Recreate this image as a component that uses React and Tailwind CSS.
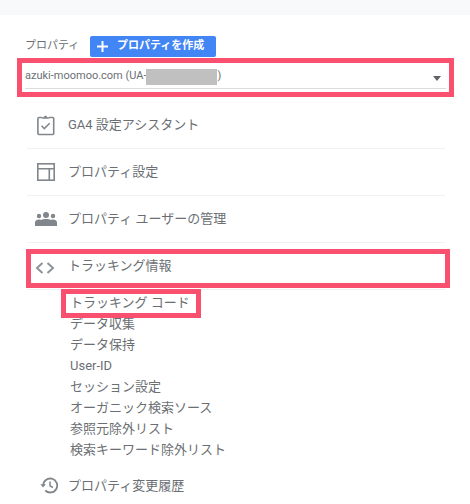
import React from 'react';

const FONT = "font-['Roboto','Noto_Sans_CJK_JP',sans-serif]";

const subItems = [
    'トラッキング コード',
    'データ収集',
    'データ保持',
    'User-ID',
    'セッション設定',
    'オーガニック検索ソース',
    '参照元除外リスト',
    '検索キーワード除外リスト',
];

// ── Icons ─────────────────────────────────────────────────
const ClipboardIcon = () => (
    <svg width="20" height="22" viewBox="0 0 20 22" fill="none" stroke="#80868b" strokeWidth="1.6">
        <path d="M6 3.5H2.800a.9.9 0 0 0-.9.9v15.200c0 .5.4.9.9.9h14c.5 0 .9-.4.9-.9V4.400a.9.9 0 0 0-.9-.9H13" />
        <path d="M6 4.800V3.300h1.700C7.900 1.200 11.100 1.200 11.300 3.300H13v1.500z" fill="#80868b" stroke="none" />
        <path d="M5.500 11.800l2.800 2.800 5.400-5.400" strokeWidth="1.500" />
    </svg>
);

const WindowIcon = () => (
    <svg width="18" height="18" viewBox="0 0 18 18" fill="none" stroke="#80868b" strokeWidth="1.600">
        <rect x="0.800" y="0.800" width="16.400" height="16.400" />
        <path d="M1 5.800H17M12.300 5.800V17" />
    </svg>
);

const PeopleIcon = () => (
    <svg width="22" height="14" viewBox="0 0 22 14" fill="#80868b">
        <circle cx="4" cy="4" r="2.200" />
        <circle cx="11" cy="3" r="3" />
        <circle cx="18" cy="4" r="2.200" />
        <path d="M0 14V10.500C0 8.500 2 7.500 4 7.500c.8 0 1.500.1 2.100.4C7.300 7.200 9.200 7 11 7s3.700.2 4.900.9c.6-.3 1.300-.4 2.100-.4 2 0 4 1 4 3V14z" />
    </svg>
);

const CodeIcon = () => (
    <svg width="20" height="12" viewBox="0 0 20 12" fill="none" stroke="#8f9397" strokeWidth="2">
        <path d="M7.500 1L2 6l5.500 5M12.500 1L18 6l-5.500 5" />
    </svg>
);

const HistoryIcon = () => (
    <svg width="18" height="17" viewBox="0 0 18 17" fill="none" stroke="#80868b" strokeWidth="1.800">
        <path d="M3.200 8.500a7 7 0 1 1 2.100 5" />
        <path d="M0.300 7.300h5.600L3.100 10.500z" fill="#80868b" stroke="none" />
        <path d="M10 4.500V8.800l2.900 1.700" strokeWidth="1.500" />
    </svg>
);

const NavRow = ({ icon, label, divider = true, iconClass = 'pr-[5px]' }) => (
    <div className={`flex h-[47px] items-center ${divider ? 'border-b border-[#f1f1f1]' : ''}`}>
        <div className={`flex w-[41px] shrink-0 items-center justify-center ${iconClass}`}>{icon}</div>
        <span className="text-[13px] text-[#6b6f73]">{label}</span>
    </div>
);

export default function App() {
    return (
        <div className={`relative h-[504px] w-[470px] overflow-hidden bg-white ${FONT}`}>
            <div className="h-[15px] bg-[#f8f9fa]" />

            <div className="pl-[25px] pr-[24px]">
                <div className="mt-[21px] flex h-[21px] items-center gap-[12px]">
                    <span className="w-[53px] whitespace-nowrap text-[11px] text-[#6b6f73]">プロパティ</span>
                    <button className="flex h-[21px] w-[126px] items-center rounded-[2px] bg-[#4285f4] pl-[6px] text-[11px] font-bold text-white">
                        <svg width="13" height="13" viewBox="0 0 13 13" stroke="white" strokeWidth="2">
                            <path d="M6.500 1V12M1 6.500H12" />
                        </svg>
                        <span className="ml-[8px] whitespace-nowrap">プロパティを作成</span>
                    </button>
                </div>

                <div className="mt-[6px] flex h-[26px] items-center border-b border-[#dadce0] pt-[2px]">
                    <span className="whitespace-nowrap text-[11px] text-[#6b6f73]">azuki-moomoo.com (UA-</span>
                    <span className="h-[16px] w-[71px] bg-[#c0c0c0]" />
                    <span className="text-[11px] text-[#6b6f73]">)</span>
                    <span className="ml-auto mr-[5px] mt-[3px] h-0 w-0 border-x-[4.5px] border-t-[5px] border-x-transparent border-t-[#5f6368]" />
                </div>
            </div>

            <div className="ml-[27px] mr-[25px] mt-[13px]">
                <NavRow icon={<ClipboardIcon />} label="GA4 設定アシスタント" iconClass="pr-[3px]" />
                <NavRow icon={<WindowIcon />} label="プロパティ設定" iconClass="pr-[3px]" />
                <NavRow icon={<PeopleIcon />} label="プロパティ ユーザーの管理" iconClass="pr-[3px]" />
                <NavRow icon={<CodeIcon />} label="トラッキング情報" iconClass="pr-[5px] pt-[3px]" />
            </div>

            <ul className="ml-[70px] mt-[2px]">
                {subItems.map(item => (
                    <li key={item} className="flex h-[21px] items-center text-[13px] text-[#6b6f73]">{item}</li>
                ))}
            </ul>

            <div className="ml-[27px] mt-[2px]">
                <NavRow icon={<HistoryIcon />} label="プロパティ変更履歴" divider={false} iconClass="pl-[2px]" />
            </div>

            {/* Red annotation frames drawn over the screenshot */}
            <div className="absolute left-[17px] top-[58px] h-[39px] w-[437px] border-[5px] border-[#f8506e]" />
            <div className="absolute left-[26px] top-[249px] h-[39px] w-[424px] border-[5px] border-[#f8506e]" />
            <div className="absolute left-[61px] top-[289px] h-[29px] w-[140px] border-[5px] border-[#f8506e]" />
        </div>
    );
}
